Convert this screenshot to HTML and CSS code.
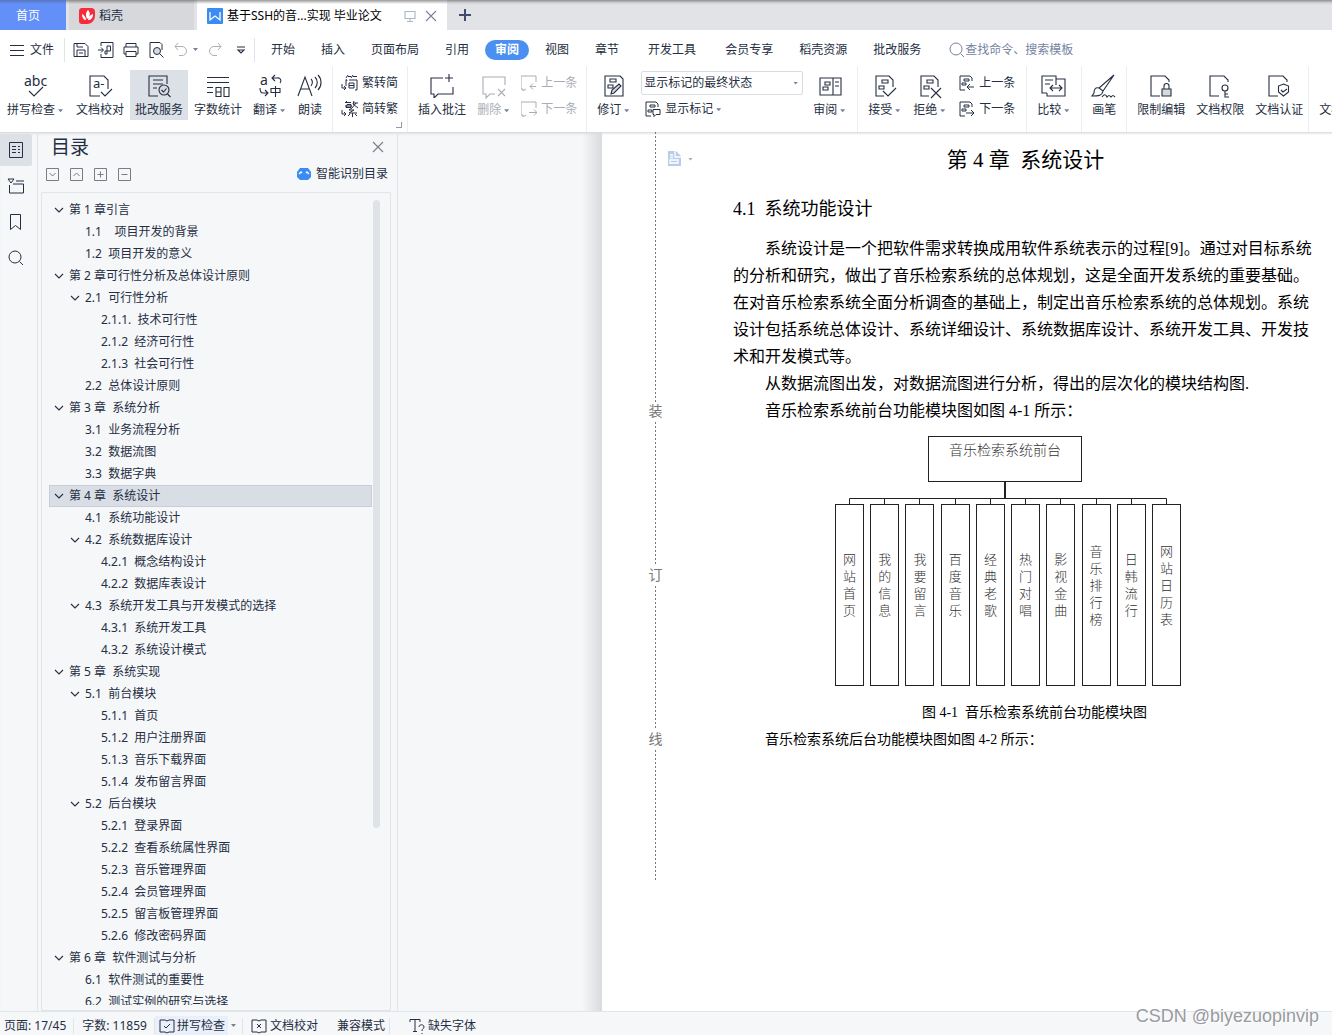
FILE: index.html
```html
<!DOCTYPE html>
<html lang="zh-CN">
<head>
<meta charset="utf-8">
<meta name="viewport" content="width=device-width, initial-scale=1">
<title>基于SSH的音乐检索系统的设计与实现 毕业论文</title>
<link rel="stylesheet" href="styles.css">
</head>
<body>
<svg class="sprite" aria-hidden="true">
  <symbol id="doc" viewBox="0 0 24 24"><path d="M20 13V6l-4-4H3v20h8"/></symbol>
  <symbol id="lockdoc" viewBox="0 0 24 24"><path d="M20 8V6l-4-4H2v20h9"/></symbol>
  <symbol id="marks" viewBox="0 0 24 24"><path d="M9 6h6v3H9zM6 12h5v3H6z"/></symbol>
  <symbol id="speech" viewBox="0 0 24 24"><path d="M13 4H1v16h3v4l4-4h15v-7M19 0v8M15 4h8"/></symbol>
  <symbol id="prev" viewBox="0 0 16 16"><path d="M15 7V1H0v13h2v2l3-2M15 11.500H9m3-3-3 3 3 3"/></symbol>
  <symbol id="next" viewBox="0 0 16 16"><path d="M15 7V1H0v13h2v2l3-2M8 11.500h8m-3-3 3 3-3 3"/></symbol>
  <symbol id="mprev" viewBox="0 0 16 16"><path d="M13 6V3l-2-2H1v14h5M5 4h5v2H5zM3 8h4v2H3zM15 12H8m3-3-3 3 3 3"/></symbol>
  <symbol id="mnext" viewBox="0 0 16 16"><path d="M13 6V3l-2-2H1v14h5M5 4h5v2H5zM3 8h4v2H3zM7 12h8m-3-3 3 3-3 3"/></symbol>
  <symbol id="chev" viewBox="0 0 12 12"><path d="M2 4l4 4 4-4"/></symbol>
  <symbol id="glass" viewBox="0 0 16 16"><circle cx="7" cy="7" r="6"/><path d="M11.500 11.500 15 15"/></symbol>
</svg>

<header class="app-head">
  <div class="tabbar">
    <button class="tab tab-home">首页</button>
    <button class="tab tab-docer">
      <svg class="logo" viewBox="0 0 16 16"><path class="red" d="M8 0h4a4 4 0 0 1 4 4v4a8 8 0 0 1-8 8H3a3 3 0 0 1-3-3V3a3 3 0 0 1 3-3z"/><path class="wht" d="M9 2c-3 3-2 6-1 9 3-2 4-6 1-9zM3 6c0 4 2 6 4 6 0-3-2-5-4-6zM14 6c-3 1-5 3-5 6 3 0 5-2 5-6z"/></svg>稻壳</button>
    <div class="tab tab-doc">
      <svg class="logo" viewBox="0 0 16 16"><rect class="blu" width="16" height="16" rx="1"/><path class="wline" d="M3 4v8l5-4 5 4V4"/></svg>
      <span class="tab-name">基于SSH的音...实现 毕业论文</span>
      <svg class="ico i12 faint" viewBox="0 0 12 12"><path d="M1 1.500h10v7H1zM6 9v2M3 11.500h6"/></svg>
      <button class="bare" aria-label="关闭标签"><svg class="ico i12 slate" viewBox="0 0 12 12"><path d="M1 1l10 10M11 1 1 11"/></svg></button>
    </div>
    <button class="bare tab-add" aria-label="新建标签"><svg class="ico i12" viewBox="0 0 12 12"><path d="M6 0v12M0 6h12"/></svg></button>
  </div>

  <div class="menubar">
    <button class="file-btn"><svg class="ico i14" viewBox="0 0 14 14"><path d="M0 2.500h14M0 7.500h14M0 12.500h14"/></svg>文件</button>
    <div class="quick">
      <button class="bare" aria-label="保存"><svg class="ico i16" viewBox="0 0 16 16"><path d="M1 1.500h11l3 3v10H1zM4 14V8h8v6M4 1.500V5h6M6 11h4"/></svg></button>
      <button class="bare" aria-label="输出为PDF"><svg class="ico i16" viewBox="0 0 16 16"><path d="M3 4V.500h12v15H3V12M0 8h5M3 5.500 5.500 8 3 10.500M7 12h2V4h3.500v5H7v3"/></svg></button>
      <button class="bare" aria-label="打印"><svg class="ico i16" viewBox="0 0 16 16"><path d="M3 5V1.500h10V5M3 12H1V5h14v7h-2M3 9.500h10v5H3z"/></svg></button>
      <button class="bare" aria-label="打印预览"><svg class="ico i16" viewBox="0 0 16 16"><path d="M6 15.500H2V.500h10l2 2V8"/><circle class="shade" cx="9" cy="9" r="3.500"/><path d="m11.500 11.500 4 4"/></svg></button>
      <button class="bare" aria-label="撤销"><svg class="ico i16 dim" viewBox="0 0 16 16"><path d="M5 1 2 4.500 5 8M2 4.500h7a4 4 0 0 1 0 9H6"/></svg><i class="caret"></i></button>
      <button class="bare" aria-label="恢复"><svg class="ico i16 dim" viewBox="0 0 16 16"><path d="m11 1 3 3.500L11 8M14 4.500H7a4 4 0 0 0 0 9h3"/></svg></button>
      <button class="bare more" aria-label="更多"><svg class="ico i10" viewBox="0 0 10 10"><path d="M1 2h8M2 5l3 3 3-3z"/></svg></button>
    </div>
    <nav class="menus">
      <div><button>开始</button><button>插入</button><button>页面布局</button><button>引用</button><button class="current">审阅</button><button>视图</button><button>章节</button></div>
      <div><button>开发工具</button></div>
      <div><button>会员专享</button><button>稻壳资源</button><button>批改服务</button></div>
    </nav>
    <label class="search"><svg class="ico i16" viewBox="0 0 16 16"><use href="#glass"/></svg><input type="text" placeholder="查找命令、搜索模板" aria-label="查找命令"></label>
  </div>

  <div class="ribbon">
    <div class="group first">
      <button class="big"><svg class="ico i24" viewBox="0 0 24 24"><text class="abc" x="0" y="12">abc</text><path d="m5 17 5 5 9-9"/></svg><span>拼写检查<i class="caret"></i></span></button>
      <button class="big"><svg class="ico i24" viewBox="0 0 24 24"><path d="M20 15V6l-4-4H2v20h10M13 18l4 4 7-7"/><text class="aa" x="5" y="14">a-</text></svg><span>文档校对</span></button>
      <button class="big on"><svg class="ico i24" viewBox="0 0 24 24"><path d="M20 10V2H2v20h9M6 6h10M6 10h10M6 14h4"/><circle class="shade" cx="17" cy="16" r="5"/><path d="m14.500 16 2 2 3-3.500M20.500 20l3 3"/></svg><span>批改服务</span></button>
      <button class="big"><svg class="ico i24" viewBox="0 0 24 24"><path d="M1 3.500h22M1 8.500h22M1 13.500h6M1 18.500h6M10 13.500h5v9h-5zM18 13.500h5v9h-5zM10 18h5"/></svg><span>字数统计</span></button>
      <button class="big"><svg class="ico i24" viewBox="0 0 24 24"><text class="abc" x="2" y="11">a</text><path d="M17 1l-3 3 3 3M14 4h5a3 3 0 0 1 3 5M2 14c0 4 1 5 3 5h4M7 16l3 3-3 3M13 14.500h9v4h-9zM17.500 12v11"/></svg><span>翻译<i class="caret"></i></span></button>
      <button class="big"><svg class="ico i24" viewBox="0 0 24 24"><path d="m0 22 7-19 7 19M3 15h9M13 5c2 2 2 4 0 7M17 3c3 3 3 8 0 11M20 1c4 4 4 11 0 15"/></svg><span>朗读</span></button>
    </div>
    <div class="group corner">
      <div class="stack">
        <button class="small"><svg class="ico i16" viewBox="0 0 16 16"><path d="M4 3l2-3M6 1.500h3M9 3l2-3M11 1.500h4M4 5v6M4 4l1 2M7 5h8v10h-2M7 8h5v5H7zM7 10.500h5M0 9v4h4m-2-2 2 2-2 2"/></svg>繁转简</button>
        <button class="small"><svg class="ico i16" viewBox="0 0 16 16"><path d="M5 0 3 2M4 1.500h5M5 3.500h4v3H4zM3 5h7M12 0l-1 3M11 2h5M14 2l-4 5M11 3l5 4M10 7 7 9h5l-5 3h8M10.500 12v4M8 13l-2 2M13 13l2 2M0 9v4h4m-2-2 2 2-2 2"/></svg>简转繁</button>
      </div>
    </div>
    <div class="group">
      <button class="big"><svg class="ico i24" viewBox="0 0 24 24"><use href="#speech"/></svg><span>插入批注</span></button>
      <button class="big off" disabled><svg class="ico i24" viewBox="0 0 24 24"><path d="M23 11V3H1v17h3v4l4-4h5M16 15l7 7M23 15l-7 7"/></svg><span>删除<i class="caret"></i></span></button>
      <div class="stack">
        <button class="small off" disabled><svg class="ico i16"><use href="#prev"/></svg>上一条</button>
        <button class="small off" disabled><svg class="ico i16"><use href="#next"/></svg>下一条</button>
      </div>
    </div>
    <div class="group">
      <button class="big"><svg class="ico i24" viewBox="0 0 24 24"><path d="M18 2l3 3v17H3V2zM8 5h6v3H8zM6 11h5v3H6z"/><path class="shade" d="m9 20 1-4 7-6 2 2-7 7z"/></svg><span>修订<i class="caret"></i></span></button>
      <div class="stack">
        <div class="combo"><select aria-label="显示状态"><option>显示标记的最终状态</option></select><i class="caret"></i></div>
        <button class="small inset"><svg class="ico i16" viewBox="0 0 16 16"><path d="M13 6V3l-2-2H1v14h5M5 4h5v2H5zM3 9h4v2H3zM8 8.500h7v5h-4l-2 2v-2H8z"/></svg><span>显示标记<i class="caret"></i></span></button>
      </div>
      <button class="big"><svg class="ico i24" viewBox="0 0 24 24"><path d="M2 4h21v17H2zM15 4v17M17 8h4M17 12h4M7 8h5v3H7zM5 13h5v3H5z"/></svg><span>审阅<i class="caret"></i></span></button>
    </div>
    <div class="group">
      <button class="big"><svg class="ico i24" viewBox="0 0 24 24"><use href="#doc"/><use href="#marks"/><path d="m10 17 5 5 8-8"/></svg><span>接受<i class="caret"></i></span></button>
      <button class="big"><svg class="ico i24" viewBox="0 0 24 24"><use href="#doc"/><use href="#marks"/><path d="m13 14 10 10M23 14 13 24"/></svg><span>拒绝<i class="caret"></i></span></button>
      <div class="stack roomy">
        <button class="small"><svg class="ico i16"><use href="#mprev"/></svg>上一条</button>
        <button class="small"><svg class="ico i16"><use href="#mnext"/></svg>下一条</button>
      </div>
    </div>
    <div class="group">
      <button class="big"><svg class="ico i24" viewBox="0 0 24 24"><path d="M14 5V2H0v17h5M3 6h8M3 10h5M5 19v3h18V5h-9v6M8 14h12M11 11l-3 3 3 3M17 11l3 3-3 3"/></svg><span>比较<i class="caret"></i></span></button>
    </div>
    <div class="group">
      <button class="big"><svg class="ico i24" viewBox="0 0 24 24"><path d="M22 1 7 14l4 3zM7 14c-4-1-5 2-5 5l-2 3c6 0 10 0 11-5M10 23c2-3 4-3 5 0 2-2 2-2 4 0 2-2 2-2 4 0"/></svg><span>画笔</span></button>
    </div>
    <div class="group tight">
      <button class="big"><svg class="ico i24" viewBox="0 0 24 24"><use href="#lockdoc"/><path class="shade" d="M13 15h9v7h-9z"/><path d="M15 15v-3a2.500 2.500 0 0 1 5 0v3"/></svg><span>限制编辑</span></button>
      <button class="big"><svg class="ico i24" viewBox="0 0 24 24"><use href="#lockdoc"/><circle cx="17" cy="14" r="3"/><path d="M17 17v6h4M17 20h3"/></svg><span>文档权限</span></button>
      <button class="big"><svg class="ico i24" viewBox="0 0 24 24"><use href="#lockdoc"/><path d="M16.500 10l5 2v6l-5 4-5-4v-6zM14 16l2 2 4-3"/></svg><span>文档认证</span></button>
    </div>
    <div class="group">
      <button class="big"><svg class="ico i24" viewBox="0 0 24 24"><use href="#doc"/></svg><span>文档定稿</span></button>
    </div>
  </div>
</header>

<main class="work">
  <aside class="rail">
    <button class="on" aria-label="目录"><svg class="ico i16" viewBox="0 0 16 16"><path d="M1.500.500h13v15h-13zM4 4.500h4M4 7.500h4M4 10.500h4M10 4.500h2M10 7.500h2M10 10.500h2"/></svg></button>
    <button aria-label="章节"><svg class="ico i16" viewBox="0 0 16 16"><path d="M0 1h6L3 5zM8 3h8M1.500 7v8h14V6H5"/></svg></button>
    <button aria-label="书签"><svg class="ico i16" viewBox="0 0 16 16"><path d="M2.500.500h10v15l-5-4-5 4z"/></svg></button>
    <button aria-label="查找"><svg class="ico i16" viewBox="0 0 16 16"><use href="#glass"/></svg></button>
  </aside>

  <section class="toc">
    <div class="toc-head"><h2>目录</h2><button class="bare" aria-label="关闭"><svg class="ico i10 grey" viewBox="0 0 10 10"><path d="M0 0l10 10M10 0 0 10"/></svg></button></div>
    <div class="toc-tools">
      <button class="bare" aria-label="展开"><svg class="ico i13 grey" viewBox="0 0 13 13"><path d="M.500.500h12v12H.500zM3.500 5l3 3 3-3"/></svg></button>
      <button class="bare" aria-label="收起"><svg class="ico i13 grey" viewBox="0 0 13 13"><path d="M.500.500h12v12H.500zM3.500 8l3-3 3 3"/></svg></button>
      <button class="bare" aria-label="增加"><svg class="ico i13 grey" viewBox="0 0 13 13"><path d="M.500.500h12v12H.500zM3.500 6.500h6M6.500 3.500v6"/></svg></button>
      <button class="bare" aria-label="减少"><svg class="ico i13 grey" viewBox="0 0 13 13"><path d="M.500.500h12v12H.500zM3.500 6.500h6"/></svg></button>
      <button class="smart"><svg class="i14" viewBox="0 0 14 14"><path class="blu" d="M3 1h8l3 4v5l-3 3H3l-3-3V5z"/><path class="wline" d="M2 7l2-2 1 1M9 6l1-1 2 2"/></svg>智能识别目录</button>
    </div>
    <div class="tree">
      <ul>
        <li class="l1"><svg class="ico i12"><use href="#chev"/></svg><a href="#">第 1 章引言</a></li>
        <li class="l2"><a href="#">1.1    项目开发的背景</a></li>
        <li class="l2"><a href="#">1.2  项目开发的意义</a></li>
        <li class="l1"><svg class="ico i12"><use href="#chev"/></svg><a href="#">第 2 章可行性分析及总体设计原则</a></li>
        <li class="l2"><svg class="ico i12"><use href="#chev"/></svg><a href="#">2.1  可行性分析</a></li>
        <li class="l3"><a href="#">2.1.1.  技术可行性</a></li>
        <li class="l3"><a href="#">2.1.2  经济可行性</a></li>
        <li class="l3"><a href="#">2.1.3  社会可行性</a></li>
        <li class="l2"><a href="#">2.2  总体设计原则</a></li>
        <li class="l1"><svg class="ico i12"><use href="#chev"/></svg><a href="#">第 3 章  系统分析</a></li>
        <li class="l2"><a href="#">3.1  业务流程分析</a></li>
        <li class="l2"><a href="#">3.2  数据流图</a></li>
        <li class="l2"><a href="#">3.3  数据字典</a></li>
        <li class="l1 sel"><svg class="ico i12"><use href="#chev"/></svg><a href="#">第 4 章  系统设计</a></li>
        <li class="l2"><a href="#">4.1  系统功能设计</a></li>
        <li class="l2"><svg class="ico i12"><use href="#chev"/></svg><a href="#">4.2  系统数据库设计</a></li>
        <li class="l3"><a href="#">4.2.1  概念结构设计</a></li>
        <li class="l3"><a href="#">4.2.2  数据库表设计</a></li>
        <li class="l2"><svg class="ico i12"><use href="#chev"/></svg><a href="#">4.3  系统开发工具与开发模式的选择</a></li>
        <li class="l3"><a href="#">4.3.1  系统开发工具</a></li>
        <li class="l3"><a href="#">4.3.2  系统设计模式</a></li>
        <li class="l1"><svg class="ico i12"><use href="#chev"/></svg><a href="#">第 5 章  系统实现</a></li>
        <li class="l2"><svg class="ico i12"><use href="#chev"/></svg><a href="#">5.1  前台模块</a></li>
        <li class="l3"><a href="#">5.1.1  首页</a></li>
        <li class="l3"><a href="#">5.1.2  用户注册界面</a></li>
        <li class="l3"><a href="#">5.1.3  音乐下载界面</a></li>
        <li class="l3"><a href="#">5.1.4  发布留言界面</a></li>
        <li class="l2"><svg class="ico i12"><use href="#chev"/></svg><a href="#">5.2  后台模块</a></li>
        <li class="l3"><a href="#">5.2.1  登录界面</a></li>
        <li class="l3"><a href="#">5.2.2  查看系统属性界面</a></li>
        <li class="l3"><a href="#">5.2.3  音乐管理界面</a></li>
        <li class="l3"><a href="#">5.2.4  会员管理界面</a></li>
        <li class="l3"><a href="#">5.2.5  留言板管理界面</a></li>
        <li class="l3"><a href="#">5.2.6  修改密码界面</a></li>
        <li class="l1"><svg class="ico i12"><use href="#chev"/></svg><a href="#">第 6 章  软件测试与分析</a></li>
        <li class="l2"><a href="#">6.1  软件测试的重要性</a></li>
        <li class="l2"><a href="#">6.2  测试实例的研究与选择</a></li>
      </ul>
      <div class="scroll"><i></i></div>
    </div>
  </section>

  <div class="canvas">
    <div class="paper">
      <div class="binding"><i class="dash first"></i><b>装</b><i class="dash"></i><b>订</b><i class="dash"></i><b>线</b><i class="dash last"></i></div>
      <div class="gutter"><svg class="i16" viewBox="0 0 16 16"><path class="pale" d="M1 0h8l5 5v10H1z"/><path class="wline" d="M8 0v6h6M3 4h3M3 6.500h3M3 9h8v3H3z"/></svg><i class="caret"></i></div>
      <article>
        <h1>第 4 章  系统设计</h1>
        <h2>4.1  系统功能设计</h2>
        <p>系统设计是一个把软件需求转换成用软件系统表示的过程[9]。通过对目标系统的分析和研究，做出了音乐检索系统的总体规划，这是全面开发系统的重要基础。在对音乐检索系统全面分析调查的基础上，制定出音乐检索系统的总体规划。系统设计包括系统总体设计、系统详细设计、系统数据库设计、系统开发工具、开发技术和开发模式等。</p>
        <p>从数据流图出发，对数据流图进行分析，得出的层次化的模块结构图.</p>
        <p>音乐检索系统前台功能模块图如图 4-1 所示：</p>
        <figure>
          <div class="chart">
            <div class="root">音乐检索系统前台</div>
            <svg class="wires" viewBox="0 0 346 22"><path class="stem" d="M170 0v17"/><path d="M14.500 22v-5.500h317V22M49.500 17v5M84.500 17v5M120.500 17v5M155.500 17v5M190.500 17v5M225.500 17v5M261.500 17v5M296.500 17v5"/></svg>
            <div class="leaves">
              <div><span>网站首页</span></div><div><span>我的信息</span></div><div><span>我要留言</span></div><div><span>百度音乐</span></div><div><span>经典老歌</span></div><div><span>热门对唱</span></div><div><span>影视金曲</span></div><div><span>音乐排行榜</span></div><div><span>日韩流行</span></div><div><span>网站日历表</span></div>
            </div>
          </div>
          <figcaption>图 4-1  音乐检索系统前台功能模块图</figcaption>
        </figure>
        <p class="minor">音乐检索系统后台功能模块图如图 4-2 所示：</p>
      </article>
    </div>
  </div>
</main>

<footer class="status">
  <span class="cell">页面: 17/45</span>
  <span class="cell">字数: 11859</span>
  <div class="cell proof"><button class="spell"><svg class="ico i16" viewBox="0 0 16 16"><path d="M1 2h5l2 1 2-1h5v12h-5l-2 1-2-1H1zM5 8l2 2 4-4"/></svg>拼写检查</button><i class="caret"></i></div>
  <div class="cell modes"><button class="plain"><svg class="ico i16" viewBox="0 0 16 16"><path d="M1 2h5l2 1 2-1h5v12h-5l-2 1-2-1H1zM6 6l4 4M10 6l-4 4"/></svg>文档校对</button><span>兼容模式</span></div>
  <button class="plain fonts"><svg class="ico i16" viewBox="0 0 16 16"><path d="M1 4V1.500h10V4M6 1.500v12M4 13.500h4M10 9c0-3 5-3 5 0 0 2-2 1-2 4M13 15v1"/></svg>缺失字体</button>
</footer>
<div class="watermark">CSDN @biyezuopinvip</div>
</body>
</html>
```
FILE: styles.css
```css
:root {
  --ink: #252e42;
  --line: #e1e4e8;
  --panel: #f5f7f9;
  --ui: "Noto Sans", "Noto Sans CJK SC", sans-serif;
  --text: "Liberation Serif", "Noto Sans CJK SC", serif;
}
* { box-sizing: border-box; }
body {
  margin: 0;
  height: 100vh;
  display: flex;
  flex-direction: column;
  overflow: hidden;
  position: relative;
  background: #fff;
  color: var(--ink);
  font: 12px/18px var(--ui);
}
button, input, select { font: inherit; color: inherit; border: 0; background: none; padding: 0; margin: 0; }
button { display: flex; align-items: center; white-space: nowrap; flex: none; }
h1, h2, p, ul, figure { margin: 0; padding: 0; font-weight: 400; }
.sprite { position: absolute; width: 0; height: 0; }

/* icons */
.ico { fill: none; stroke: currentColor; stroke-width: 1.1; flex: none; overflow: visible; }
.i10 { width: 10px; height: 10px; }
.i12 { width: 12px; height: 12px; }
.i13 { width: 13px; height: 13px; stroke-width: 1; }
.i14 { width: 14px; height: 14px; }
.i16 { width: 16px; height: 16px; stroke-width: 1; }
.i24 { width: 24px; height: 24px; }
.logo { width: 16px; height: 16px; flex: none; }
.red { fill: #f52c3c; }
.wht { fill: #fff; }
.blu { fill: #3b8cf2; }
.pale { fill: #b9cdea; }
.wline { fill: none; stroke: #fff; stroke-width: 1.3; }
.shade { fill: #d5d9e0; }
.faint { color: #a9b5cb; }
.slate { color: #76829b; }
.grey { color: #777d86; }
.dim { color: #abafb6; }
.abc { font: 14px var(--ui); fill: currentColor; stroke: none; }
.aa { font: 13px var(--ui); fill: currentColor; stroke: none; }
.caret {
  display: inline-block;
  flex: none;
  width: 5px;
  height: 3px;
  margin: 0 2px 0 3px;
  background: #75809a;
  clip-path: polygon(0 0, 100% 0, 50% 100%);
  vertical-align: middle;
}

/* window tabs */
.tabbar {
  display: flex;
  height: 30px;
  gap: 3px;
  background: linear-gradient(#8f8f91, #d5d6d9 3px, #e2e3e6 5px);
}
.tab { display: flex; align-items: center; height: 30px; padding-top: 2px; }
.tab-home { width: 66px; padding-left: 16px; background: linear-gradient(#5776bb, #628ff8 4px); color: #fff; }
.tab-docer { width: 125px; padding-left: 10px; gap: 4px; background: linear-gradient(#8b8b8d, #d7d8dc 4px); }
.tab-doc { width: 250px; padding: 2px 10px 0; gap: 4px; background: linear-gradient(#9b9b9b, #fff 4px); color: #000; }
.tab-name { flex: 1; white-space: nowrap; }
.tab-doc .bare { margin-left: 5px; }
.tab-add { padding-left: 9px; color: #414d68; }
.tab-add .ico { stroke-width: 2; }

/* menu row */
.menubar { display: flex; align-items: center; height: 36px; padding-top: 3px; }
.file-btn { gap: 6px; height: 24px; width: 65px; padding-left: 10px; border-right: 1px solid var(--line); }
.quick { display: flex; align-items: center; width: 190px; height: 24px; padding-left: 8px; gap: 9px; border-right: 1px solid var(--line); }
.quick .caret { margin: 0 0 0 4px; }
.more { margin-left: 4px; }
.menus { display: flex; gap: 9px; padding-left: 6px; }
.menus div { display: flex; gap: 6px; }
.menus button { height: 20px; padding: 0 10px; border-radius: 10px; }
.menus .current { background: #4a90f0; color: #fff; font-weight: 700; }
.search { display: flex; align-items: center; margin-left: 18px; color: #75839f; }
.search input { width: 130px; outline: 0; }
.search input::placeholder { color: #75839f; opacity: 1; }

/* ribbon */
.ribbon { display: flex; height: 66px; overflow: hidden; }
.group { display: flex; flex: none; gap: 1px; padding: 4px 5px 0; border-right: 1px solid #eceef1; position: relative; }
.group.first { padding-left: 2px; }
.group.tight { padding-right: 0; }
.corner::after { content: ""; position: absolute; right: 5px; bottom: 4px; width: 5px; height: 5px; border: solid #9097a5; border-width: 0 1px 1px 0; }
.big { flex-direction: column; height: 50px; padding: 4px 5px 0; gap: 3px; }
.on { background: #dce1e7; }
.off { color: #a9adb5; }
.stack { display: flex; flex-direction: column; align-items: flex-start; gap: 2px; padding: 1px 4px 0; }
.roomy { padding: 1px 6px 0; }
.small { height: 24px; gap: 4px; }
.inset { padding-left: 4px; }
.combo { display: flex; align-items: center; width: 162px; height: 24px; padding: 0 2px; border: 1px solid #d9dce1; border-radius: 2px; }
.combo select { flex: 1; min-width: 0; appearance: none; outline: 0; }

/* workspace */
.work { flex: 1; min-height: 0; display: flex; background: var(--panel); box-shadow: inset 0 3px 3px -2px #ccced2; }
.rail { flex: none; width: 38px; padding-top: 2px; display: flex; flex-direction: column; gap: 4px; border-right: 1px solid var(--line); }
.rail button { width: 32px; height: 32px; justify-content: center; border-radius: 0 2px 2px 0; }
.toc { flex: none; width: 360px; display: flex; flex-direction: column; padding: 0 6px 0 3px; border-right: 1px solid var(--line); }
.toc-head { display: flex; align-items: center; justify-content: space-between; height: 30px; padding: 0 8px 0 10px; }
.toc-head h2 { font-size: 19px; line-height: 30px; }
.toc-tools { display: flex; align-items: center; gap: 11px; height: 24px; padding: 0 3px 0 5px; margin-bottom: 6px; }
.smart { margin-left: auto; gap: 5px; }
.tree { flex: 1; min-height: 0; display: flex; padding: 6px 10px 5px 7px; border: 1px solid var(--line); border-radius: 2px; }
.tree ul { flex: 1; overflow: hidden; list-style: none; }
.tree li { display: flex; align-items: center; justify-content: flex-start; gap: 4px; height: 22px; }
.tree a { color: inherit; text-decoration: none; white-space: pre; }
.tree .l1 { padding-left: 4px; }
.tree .l2 { padding-left: 20px; }
.tree .l3 { padding-left: 36px; }
.tree li > a:first-child { margin-left: 16px; }
.tree .sel { background: #d9dee6; box-shadow: inset 0 0 0 1px #c8ced8; }
.scroll { width: 8px; padding: 1px 0 0 1px; }
.scroll i { display: block; height: 78%; border-radius: 4px; background: #dfe2e6; }

/* document */
.canvas {
  flex: 1;
  min-width: 0;
  padding-left: 204px;
  overflow: hidden;
  background: linear-gradient(to right, transparent 184px, #d8dadd 204px);
}
.paper { display: flex; height: 100%; background: #fff; box-shadow: inset 0 3px 3px -2px #ccced2; color: #000; }
.binding { flex: none; display: flex; flex-direction: column; align-items: center; width: 21px; margin-left: 43px; color: #777; }
.binding b { font: 14px/20px var(--text); }
.dash { flex: none; width: 1px; height: 144px; background: repeating-linear-gradient(#777 0 2px, transparent 2px 4px); }
.dash.first { height: 270px; }
.dash.last { height: 130px; }
.gutter { flex: none; display: flex; align-items: center; width: 67px; height: 16px; margin-top: 19px; gap: 2px; padding-left: 1px; }
.gutter .caret { background: #aaa; }
article { flex: 0 1 580px; min-width: 0; padding-top: 12px; font: 16px/27px var(--text); }
article h1 { padding-left: 5px; font-size: 21px; line-height: 32px; text-align: center; white-space: pre; }
article h2 { margin: 17px 0 10px; font-size: 18px; line-height: 32px; white-space: pre; }
article p { text-indent: 2em; }
article .minor, figcaption { font-size: 14px; }
article .minor { text-indent: 32px; }
figcaption { margin-top: 13px; padding-right: 5px; text-indent: 2em; text-align: center; white-space: pre; }
.chart { display: flex; flex-direction: column; width: 346px; margin: 12px 0 0 102px; color: #333; }
.root { width: 154px; height: 46px; margin-left: 93px; border: 1px solid #222; text-align: center; font-size: 14px; font-weight: 300; }
.wires { height: 22px; fill: none; stroke: #222; stroke-width: 1; }
.stem { stroke-width: 2; }
.leaves { display: flex; justify-content: space-between; }
.leaves div { display: flex; align-items: center; justify-content: center; width: 29px; height: 182px; padding-bottom: 20px; border: 1px solid #222; }
.leaves span { width: 13px; font-size: 13px; line-height: 17px; font-weight: 300; word-break: break-all; }

/* status bar */
.status { flex: none; display: flex; align-items: center; height: 24px; padding: 4px 0 0 4px; border-top: 1px solid var(--line); background: var(--panel); white-space: nowrap; }
.cell { display: flex; align-items: center; height: 16px; padding-right: 7px; margin-right: 8px; border-right: 1px solid var(--line); }
.cell + .proof { margin-left: -8px; padding-right: 4px; }
.spell { height: 20px; padding: 0 3px 0 4px; gap: 2px; background: #e9f0fb; }
.plain { gap: 3px; }
.modes { gap: 19px; padding-right: 4px; }
.fonts { margin-left: 11px; }
.watermark { position: absolute; right: 13px; bottom: 8px; font: 18px/22px "Liberation Sans", sans-serif; color: #999b9f; text-shadow: 1px 1px 0 #fff; }
```
